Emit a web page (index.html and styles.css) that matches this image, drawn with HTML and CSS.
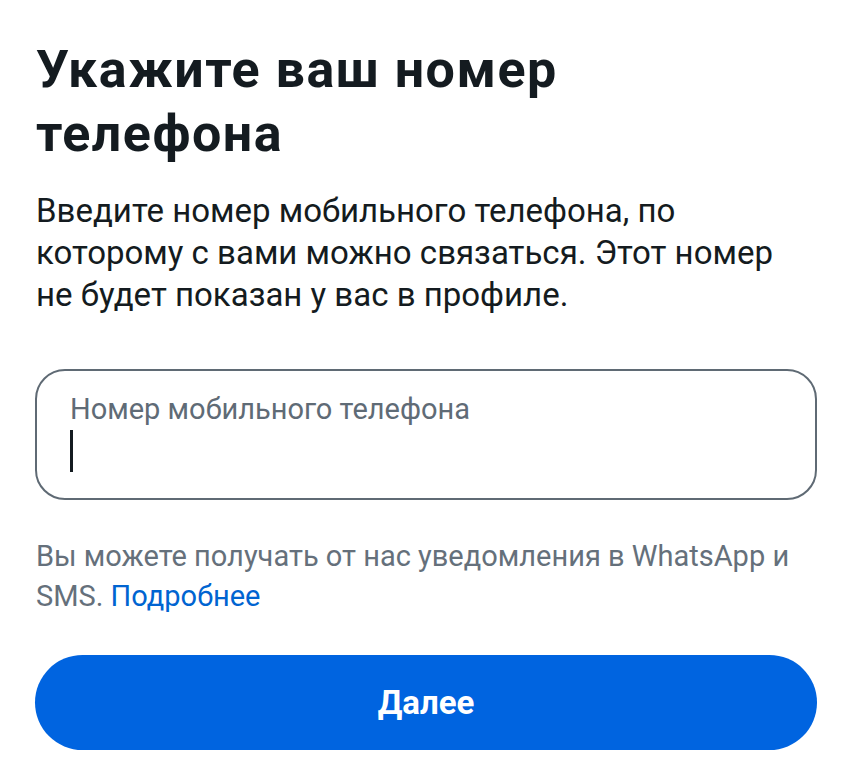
FILE: index.html
```html
<!DOCTYPE html>
<html lang="ru">
<head>
<meta charset="utf-8">
<link rel="stylesheet" href="styles.css">
</head>
<body>
<main class="page">
  <h1 class="title">Укажите ваш номер телефона</h1>
  <p class="lead">Введите номер мобильного телефона, по которому с вами можно связаться. Этот номер не будет показан у вас в профиле.</p>
  <div class="field">
    <div class="field-label">Номер мобильного телефона</div>
    <div class="caret"></div>
  </div>
  <p class="note">Вы можете получать от нас уведомления в WhatsApp и SMS. <a class="link" href="#">Подробнее</a></p>
  <button class="btn">Далее</button>
</main>
</body>
</html>
```

FILE: styles.css
```css
html, body {
  margin: 0;
  padding: 0;
  background: #ffffff;
}
body {
  font-family: Roboto, "Noto Sans", sans-serif;
  color: #1c2b33;
}
.page {
  padding: 38px 35px 0 36px;
  display: flex;
  flex-direction: column;
}
.title {
  margin: 0;
  font-size: 52px;
  line-height: 64px;
  font-weight: 700;
  letter-spacing: 1.5px;
  color: #141b20;
  width: 600px;
}
.lead {
  margin: 24px 0 0 0;
  font-size: 33px;
  line-height: 42px;
  color: #141b20;
  width: 760px;
}
.field {
  margin-top: 53px;
  height: 127px;
  border: 2px solid #5f6a74;
  border-radius: 30px;
  box-sizing: content-box;
  padding: 0 0 0 33px;
  display: flex;
  flex-direction: column;
  margin-left: -1px;
}
.field-label {
  margin-top: 20px;
  font-size: 29px;
  line-height: 36px;
  color: #5f6b76;
}
.caret {
  width: 3px;
  height: 42px;
  background: #141b20;
  margin-top: 3px;
}
.note {
  margin: 36px 0 0 0;
  font-size: 29px;
  line-height: 40px;
  color: #65707b;
}
.link {
  color: #0064d1;
  text-decoration: none;
}
.btn {
  margin-top: 39px;
  height: 95px;
  border: none;
  border-radius: 48px;
  background: #0064e0;
  color: #ffffff;
  font-family: Roboto, "Noto Sans", sans-serif;
  font-size: 33px;
  font-weight: 700;
  margin-left: -1px;
}
```
